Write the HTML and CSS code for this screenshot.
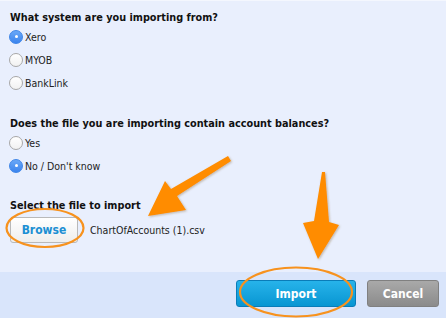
FILE: index.html
```html
<!DOCTYPE html>
<html>
<head>
<meta charset="utf-8">
<link rel="stylesheet" href="styles.css">
</head>
<body>
<div class="page">
  <div class="content">
    <div class="q">What system are you importing from?</div>
    <div class="opts">
      <div class="opt"><span class="radio on"></span><span>Xero</span></div>
      <div class="opt"><span class="radio"></span><span>MYOB</span></div>
      <div class="opt"><span class="radio"></span><span>BankLink</span></div>
    </div>
    <div class="q q2">Does the file you are importing contain account balances?</div>
    <div class="opts">
      <div class="opt"><span class="radio"></span><span>Yes</span></div>
      <div class="opt"><span class="radio on"></span><span>No / Don't know</span></div>
    </div>
    <div class="q q3">Select the file to import</div>
    <div class="file">
      <button class="browse">Browse</button>
      <span class="fname">ChartOfAccounts (1).csv</span>
    </div>
  </div>
  <div class="footer">
    <button class="btn import">Import</button>
    <button class="btn cancel">Cancel</button>
  </div>
  <svg class="overlay" width="446" height="318" viewBox="0 0 446 318">
    <defs>
      <filter id="sh" x="-20%" y="-20%" width="140%" height="140%">
        <feDropShadow dx="1" dy="1" stdDeviation="1.2" flood-color="#6a4a20" flood-opacity="0.35"/>
      </filter>
    </defs>
    <ellipse cx="45" cy="228" rx="38.5" ry="19" fill="none" stroke="#f7921e" stroke-width="2.2"/>
    <ellipse cx="296" cy="292" rx="56" ry="24.5" fill="none" stroke="#f7921e" stroke-width="2.2"/>
    <polygon filter="url(#sh)" fill="#ff8c00" points="228,156 231,161 177,196 186,210 148,216 165,181 171,189"/>
    <polygon filter="url(#sh)" fill="#ff8c00" points="322,172 325,172 329,222 339,225 318,259 303,223 314,221"/>
  </svg>
</div>
</body>
</html>
```
FILE: styles.css
```css
html, body {
  margin: 0;
  padding: 0;
}
body {
  background: #e9effd;
  font-family: "DejaVu Sans Condensed", "DejaVu Sans", sans-serif;
  font-stretch: condensed;
  color: #1a1a1a;
}
.page {
  position: relative;
  width: 446px;
  height: 318px;
  overflow: hidden;
  display: flex;
  flex-direction: column;
}
.content {
  padding: 10px 10px 0 9px;
  height: 272px;
  border-top: 1px solid #f4f7fe;
  box-sizing: border-box;
  flex: none;
}
.q {
  font-size: 10.8px;
  font-weight: bold;
  line-height: 14px;
  color: #111;
  padding-left: 1px;
}
.q2 { margin-top: 23px; }
.q3 { margin-top: 22px; }
.opts {
  display: flex;
  flex-direction: column;
}
.opt {
  height: 23px;
  display: flex;
  align-items: center;
  font-size: 10.5px;
  color: #222;
}
.radio {
  width: 12px;
  height: 12px;
  border-radius: 50%;
  border: 1px solid #a8a8a8;
  background: linear-gradient(#ffffff, #f1f1f1);
  margin-right: 2px;
  position: relative;
  box-sizing: content-box;
  flex: none;
}
.radio.on {
  border-color: #3f86e8;
  background: linear-gradient(#6aa8f7, #3b84ee);
}
.radio.on::after {
  content: "";
  position: absolute;
  left: 4.5px;
  top: 4.5px;
  width: 3px;
  height: 3px;
  border-radius: 50%;
  background: #fff;
}
.file {
  margin-top: 4px;
  display: flex;
  align-items: center;
  padding-left: 1px;
}
.browse {
  width: 68px;
  height: 26px;
  border: 1px solid #b9b9b9;
  border-radius: 3px;
  background: linear-gradient(#ffffff, #eeeeee);
  color: #1c8fd3;
  font-family: inherit;
  font-stretch: condensed;
  font-size: 12px;
  font-weight: bold;
  padding: 0;
  margin-right: 12px;
}
.fname {
  font-size: 10.5px;
  color: #222;
}
.footer {
  flex: 1;
  background: #d9e5fb;
  display: flex;
  justify-content: flex-end;
  align-items: flex-start;
  padding: 8px 7px 0 0;
  gap: 11px;
}
.btn {
  height: 27px;
  border-radius: 3px;
  color: #fff;
  font-family: inherit;
  font-stretch: condensed;
  font-size: 12px;
  font-weight: bold;
  padding: 0;
}
.import {
  width: 120px;
  border: 1px solid #0a7cb8;
  background: linear-gradient(#27b3ea, #0896d2);
}
.cancel {
  width: 72px;
  border: 1px solid #808080;
  background: linear-gradient(#a9a9a9, #8b8b8b);
}
.overlay {
  position: absolute;
  left: 0;
  top: 0;
  pointer-events: none;
}
```
